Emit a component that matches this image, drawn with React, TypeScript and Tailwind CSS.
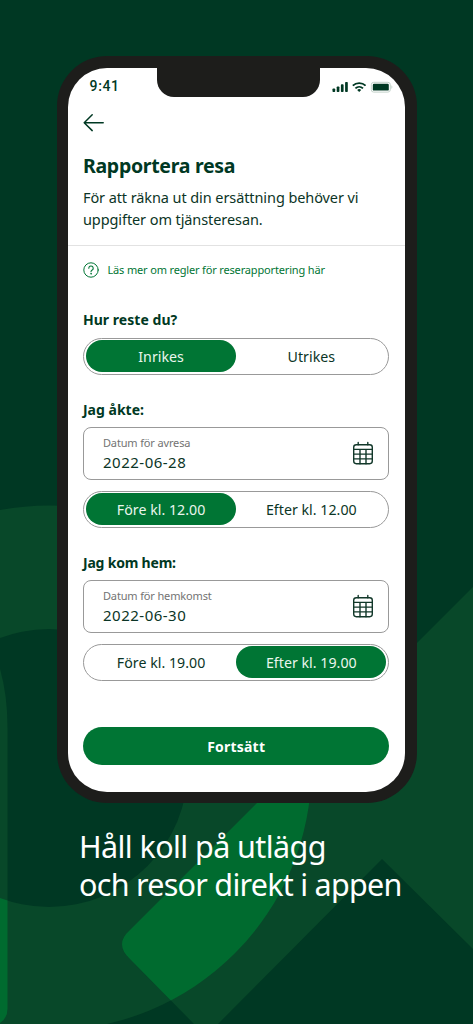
import React from "react";

function Backdrop() {
  return (
    <svg className="absolute inset-0" width="473" height="1024" viewBox="0 0 473 1024" aria-hidden="true">
      <defs>
        <clipPath id="ring">
          <path clipRule="evenodd" d="M49 505.5a262.5 262.5 0 1 0 0 525a262.5 262.5 0 1 0 0-525ZM49 629a139 139 0 1 0 0 278a139 139 0 1 0 0-278Z" />
        </clipPath>
        <path id="beam" d="M473 587L130 930Q114 944 130 959L194 1024H218L382 859L473 949Z" />
      </defs>
      <path fill="#084829" fillRule="evenodd" d="M49 505.5a262.5 262.5 0 1 0 0 525a262.5 262.5 0 1 0 0-525ZM49 629a139 139 0 1 0 0 278a139 139 0 1 0 0-278Z" />
      <use href="#beam" fill="#084829" />
      <path d="M0 669Q7.5 695 7.5 728V1009Q7.5 1018 0 1023Z" fill="#084829" />
      <g clipPath="url(#ring)" fill="#006b2f">
        <use href="#beam" />
        <path d="M0 890H7.5V1009Q7.5 1018 0 1023Z" />
      </g>
    </svg>
  );
}

function StatusIcons() {
  return (
    <svg width="62" height="12" viewBox="0 0 62 12" aria-hidden="true">
      <g fill="#003823">
        <rect x="0.5" y="7.5" width="2.7" height="3.5" rx="0.8" />
        <rect x="4.7" y="5.5" width="2.7" height="5.5" rx="0.8" />
        <rect x="8.9" y="3.3" width="2.7" height="7.7" rx="0.8" />
        <rect x="13.1" y="1" width="2.7" height="10" rx="0.8" />
        <rect x="40.8" y="2.8" width="16" height="6.8" rx="1.2" />
      </g>
      <g fill="none" stroke="#003823" strokeWidth="1.8">
        <path d="M20.8 4.7a9.2 9.2 0 0 1 12.8 0" />
        <path d="M23.4 7.4a5.5 5.5 0 0 1 7.6 0" />
      </g>
      <path d="M25.2 9l2 2.1l2-2.1a2.9 2.9 0 0 0-4 0Z" fill="#003823" />
      <rect x="39.3" y="1.3" width="19" height="9.8" rx="2.4" fill="none" stroke="#c3d2ca" />
      <path d="M59.4 4.3q2 1.7 0 3.6Z" fill="#c3d2ca" />
    </svg>
  );
}

function Calendar() {
  return (
    <svg width="22" height="24" viewBox="0 0 22 24" fill="none" stroke="#12382a" strokeWidth="1.4" strokeLinecap="round" aria-hidden="true">
      <rect x="1.7" y="3.7" width="18.6" height="19" rx="2.6" />
      <path d="M6.2 1.4v2.3M15.8 1.4v2.3M1.7 8.4h18.6M1.7 13.1h18.6M1.7 17.9h18.6M8 8.4v14.3M14 8.4v14.3" />
    </svg>
  );
}

function Toggle({ left, right, active }: { left: string; right: string; active: "left" | "right" }) {
  const base = "flex h-8 flex-1 items-center justify-center rounded-full text-[14.2px] pt-px tracking-[0.02px] ";
  return (
    <div className="flex h-[37.5px] items-center rounded-full border border-[#999] px-[2px]">
      <div className={base + (active === "left" ? "bg-[#007534] text-[#eaf5ed]" : "text-[#0b3526]")}>{left}</div>
      <div className={base + (active === "right" ? "bg-[#007534] text-[#eaf5ed]" : "text-[#0b3526]")}>{right}</div>
    </div>
  );
}

function DateField({ label, value }: { label: string; value: string }) {
  return (
    <div className="flex h-[52.5px] items-center justify-between rounded-lg border border-[#999] pr-[14px] pl-[19px]">
      <div className="pt-[2px]">
        <div className="text-[11px] leading-[16px] tracking-[-0.15px] text-[#737373]">{label}</div>
        <div className="text-[15px] leading-[22px] tracking-[0.5px] text-[#0b3526]">{value}</div>
      </div>
      <Calendar />
    </div>
  );
}

export default function App() {
  return (
    <main className="relative h-[1024px] w-[473px] overflow-hidden bg-[#003823] pt-[56px] font-['Noto_Sans',sans-serif] text-[#0b3526]">
      <Backdrop />
      <section className="relative ml-[57px] h-[747px] w-[360px] rounded-[50px] bg-[#1d1d1b] py-[11.5px] pr-[12px] pl-[11.4px]">
        <div className="relative h-full w-full overflow-hidden rounded-[39px] bg-white">
          <div className="absolute top-[-1px] left-[88.6px] h-[30.5px] w-[163px] rounded-b-[17px] bg-[#1d1d1b]" />
          <header className="flex h-[38px] items-center justify-between pr-[11.4px] pl-[21.2px]">
            <span className="font-['Roboto'] text-[14px] font-medium tracking-[0.6px] text-[#003823]">9:41</span>
            <StatusIcons />
          </header>
          <div className="h-[46px] pt-[7px] pl-[15px]">
            <svg width="22" height="20" viewBox="0 0 22 20" fill="none" stroke="#003823" strokeWidth="1.5" strokeLinecap="round" strokeLinejoin="round" aria-label="Tillbaka">
              <path d="M9.2 1.8L1.2 9.8L9.2 17.6M1.2 9.8H20.2" />
            </svg>
          </div>
          <div className="h-[94.5px] border-b border-[#e2e2e2] pl-[14.6px] whitespace-nowrap">
            <h1 className="text-[19.5px] leading-[28px] font-bold tracking-[-0.3px] text-[#003823]">Rapportera resa</h1>
            <p className="mt-[6px] text-[14.5px] leading-[22.5px] tracking-[-0.09px]">
              För att räkna ut din ersättning behöver vi
              <br />
              uppgifter om tjänsteresan.
            </p>
          </div>
          <div className="pr-[15.6px] pl-[14.6px]">
            <a className="mt-[15.5px] flex h-4 items-center gap-[8.5px] whitespace-nowrap text-[#007534]">
              <svg width="16" height="16" viewBox="0 0 16 16" fill="none" stroke="#007534" strokeLinecap="round" aria-hidden="true">
                <circle cx="8" cy="8" r="7.2" />
                <path d="M5.8 6.2a2.2 2.2 0 1 1 3.4 1.9Q8 8.7 8 9.7" strokeWidth="1.1" />
                <circle cx="8" cy="11.8" r="0.3" />
              </svg>
              <span className="pt-px text-[11px] tracking-[-0.16px]">Läs mer om regler för reserapportering här</span>
            </a>
            <h2 className="mt-[32.5px] h-[20px] text-[14px] leading-[20px] font-bold tracking-[0.04px] text-[#003823]">Hur reste du?</h2>
            <div className="mt-[7.5px]"><Toggle left="Inrikes" right="Utrikes" active="left" /></div>
            <h2 className="mt-[25px] h-[20px] text-[14px] leading-[20px] font-bold text-[#003823]">Jag åkte:</h2>
            <div className="mt-[7px]"><DateField label="Datum för avresa" value="2022-06-28" /></div>
            <div className="mt-[11px]"><Toggle left="Före kl. 12.00" right="Efter kl. 12.00" active="left" /></div>
            <h2 className="mt-[25px] h-[20px] text-[14px] leading-[20px] font-bold tracking-[-0.2px] text-[#003823]">Jag kom hem:</h2>
            <div className="mt-[7px]"><DateField label="Datum för hemkomst" value="2022-06-30" /></div>
            <div className="mt-[11px]"><Toggle left="Före kl. 19.00" right="Efter kl. 19.00" active="right" /></div>
            <button className="mt-[46px] flex h-[37.5px] w-full items-center justify-center rounded-full bg-[#007534] pt-px text-[14px] font-bold tracking-[0.2px] text-white">Fortsätt</button>
          </div>
        </div>
      </section>
      <p className="relative mt-[23.5px] ml-[79px] text-[30.5px] leading-[38px] whitespace-nowrap text-white">
        <span className="tracking-[-0.58px]">Håll koll på utlägg</span>
        <br />
        <span className="tracking-[-0.73px]">och resor direkt i appen</span>
      </p>
    </main>
  );
}
